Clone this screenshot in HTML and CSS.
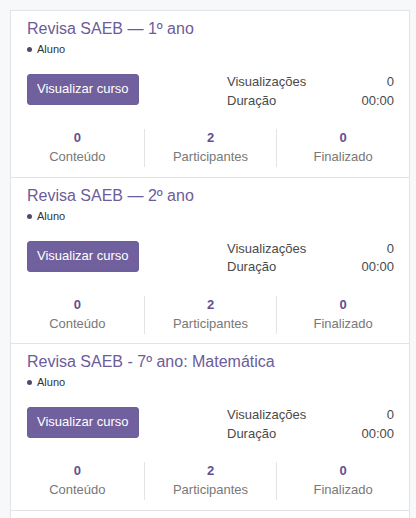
FILE: index.html
```html
<!DOCTYPE html>
<html lang="pt-BR">
<head>
<meta charset="utf-8">
<title>Cursos</title>
<link rel="stylesheet" href="styles.css">
</head>
<body>
<div class="list">
  <div class="course">
    <div class="course-body">
      <h3 class="title">Revisa SAEB — 1º ano</h3>
      <div class="role"><span class="dot"></span>Aluno</div>
      <div class="actions">
        <a class="btn" href="#">Visualizar curso</a>
        <div class="meta">
          <div class="meta-row"><span>Visualizações</span><span>0</span></div>
          <div class="meta-row"><span>Duração</span><span>00:00</span></div>
        </div>
      </div>
    </div>
    <div class="stats">
      <div class="stat"><div class="num">0</div><div class="label">Conteúdo</div></div>
      <div class="stat"><div class="num">2</div><div class="label">Participantes</div></div>
      <div class="stat"><div class="num">0</div><div class="label">Finalizado</div></div>
    </div>
  </div>
  <div class="course">
    <div class="course-body">
      <h3 class="title">Revisa SAEB — 2º ano</h3>
      <div class="role"><span class="dot"></span>Aluno</div>
      <div class="actions">
        <a class="btn" href="#">Visualizar curso</a>
        <div class="meta">
          <div class="meta-row"><span>Visualizações</span><span>0</span></div>
          <div class="meta-row"><span>Duração</span><span>00:00</span></div>
        </div>
      </div>
    </div>
    <div class="stats">
      <div class="stat"><div class="num">0</div><div class="label">Conteúdo</div></div>
      <div class="stat"><div class="num">2</div><div class="label">Participantes</div></div>
      <div class="stat"><div class="num">0</div><div class="label">Finalizado</div></div>
    </div>
  </div>
  <div class="course">
    <div class="course-body">
      <h3 class="title">Revisa SAEB - 7º ano: Matemática</h3>
      <div class="role"><span class="dot"></span>Aluno</div>
      <div class="actions">
        <a class="btn" href="#">Visualizar curso</a>
        <div class="meta">
          <div class="meta-row"><span>Visualizações</span><span>0</span></div>
          <div class="meta-row"><span>Duração</span><span>00:00</span></div>
        </div>
      </div>
    </div>
    <div class="stats">
      <div class="stat"><div class="num">0</div><div class="label">Conteúdo</div></div>
      <div class="stat"><div class="num">2</div><div class="label">Participantes</div></div>
      <div class="stat"><div class="num">0</div><div class="label">Finalizado</div></div>
    </div>
  </div>
  <div class="course course-next"></div>
</div>
</body>
</html>
```

FILE: styles.css
```css
html, body {
  margin: 0;
  padding: 0;
}

body {
  background: #f7f8fa;
  font-family: "Liberation Sans", Arial, sans-serif;
  color: #4a4a4a;
}

.list {
  margin: 10px 6px 0 10px;
  background: #ffffff;
  border: 1px solid #e2e3e7;
  border-bottom: none;
}

.course {
  border-bottom: 1px solid #e2e3e7;
}

.course-next {
  height: 20px;
  border-bottom: none;
}

.course-body {
  padding: 8px 15px 0 16px;
}

.title {
  margin: 0;
  font-size: 16px;
  line-height: 20px;
  font-weight: normal;
  color: #6c5c99;
}

.role {
  margin-top: 2px;
  display: flex;
  align-items: center;
  font-size: 11px;
  line-height: 16px;
  color: #333333;
}

.dot {
  width: 5px;
  height: 5px;
  border-radius: 50%;
  background: #4b4e6b;
  margin: 1px 5px 0 0;
}

.actions {
  display: flex;
  align-items: flex-start;
  justify-content: space-between;
  margin-top: 16px;
}

.btn {
  display: block;
  margin-top: 1px;
  padding: 5px 9px 7px;
  font-size: 13px;
  line-height: 17px;
  color: #ffffff;
  background: #71609e;
  border: 1px solid #6f5e9c;
  border-radius: 3px;
  text-decoration: none;
}

.meta {
  width: 167px;
  font-size: 13px;
  line-height: 18.5px;
  color: #4a4a4a;
}

.meta-row {
  display: flex;
  justify-content: space-between;
}

.stats {
  display: grid;
  grid-template-columns: repeat(3, 1fr);
  margin-top: 19px;
  padding-bottom: 9.5px;
}

.stat {
  text-align: center;
}

.stat + .stat {
  border-left: 1px solid #e4e4e6;
}

.num {
  font-size: 13px;
  line-height: 17px;
  font-weight: bold;
  color: #5f5192;
}

.label {
  font-size: 13px;
  line-height: 21px;
  color: #787878;
}
```
